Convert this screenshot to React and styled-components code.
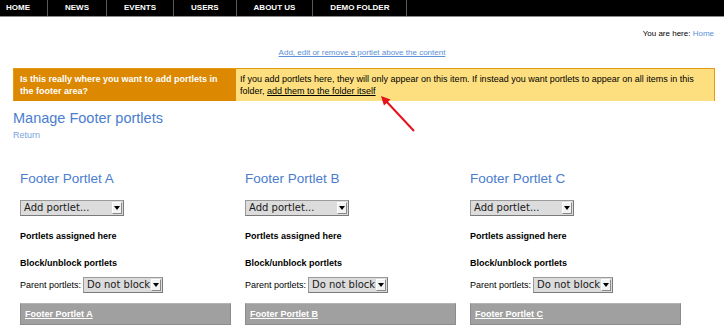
import React from "react";
import styled, { createGlobalStyle } from "styled-components";

const Global = createGlobalStyle`
  html, body { margin: 0; padding: 0; background: #fff; }
  body { font-family: "Liberation Sans", Arial, sans-serif; font-size: 9px; color: #000; }
`;

const Page = styled.div`
  position: relative;
  width: 724px;
  height: 327px;
  overflow: hidden;
`;

const Nav = styled.nav`
  display: flex;
  height: 16px;
  background: #000;
  border-bottom: 1px solid #8a8a8a;
`;

const NavItem = styled.a`
  display: flex;
  align-items: center;
  padding: 0 17px 0 ${(p) => (p.$first ? "6px" : "17px")};
  border-right: 1px solid #5a5a5a;
  color: #fff;
  font: bold 8px/16px "Liberation Sans", Arial, sans-serif;
  text-decoration: none;
  white-space: nowrap;
`;

const Breadcrumb = styled.div`
  margin-top: 11px;
  padding-right: 10px;
  text-align: right;
  font-size: 8px;
  line-height: 12px;
`;

const BlueLink = styled.a`
  color: ${(p) => p.$color || "#5b8fd6"};
  text-decoration: ${(p) => (p.$underline ? "underline" : "none")};
  cursor: pointer;
`;

const ManageLink = styled.div`
  margin-top: 7px;
  text-align: center;
  font-size: 8px;
  line-height: 12px;
`;

const Notice = styled.div`
  display: grid;
  grid-template-columns: 222px 1fr;
  margin: 9px 9px 0 13px;
  border: 1px solid #e69a12;
  height: 31px;
`;

const NoticeQuestion = styled.div`
  background: #dc8800;
  color: #fff;
  font-weight: bold;
  font-size: 9px;
  line-height: 12px;
  padding: 4px 6px;
`;

const NoticeBody = styled.div`
  background: #fddf80;
  color: #000;
  font-size: 9px;
  line-height: 12px;
  padding: 4px 4px;
`;

const InlineLink = styled.a`
  color: #000;
  text-decoration: underline;
`;

const Heading = styled.h1`
  margin: 8px 0 0 13px;
  font-weight: normal;
  font-size: 14.5px;
  line-height: 18px;
  color: #4a7dce;
`;

const Return = styled.div`
  margin: 2px 0 0 13px;
  font-size: 9px;
  line-height: 12px;
`;

const Columns = styled.div`
  display: grid;
  grid-template-columns: repeat(3, 211px);
  column-gap: 14px;
  padding-left: 20px;
  margin-top: 29px;
`;

const Column = styled.section`
  display: flex;
  flex-direction: column;
  align-items: flex-start;
`;

const ColTitle = styled.h2`
  margin: 0;
  font-weight: normal;
  font-size: 13.5px;
  line-height: 18px;
  color: #4a7dce;
`;

const Select = styled.div`
  display: inline-flex;
  align-items: center;
  box-sizing: border-box;
  height: 16px;
  width: ${(p) => p.$width}px;
  margin-top: ${(p) => p.$mt || 0}px;
  background: #dcdcdc;
  border: 1px solid #7a7a7a;
  border-top-color: #9a9a9a;
  border-left-color: #9a9a9a;
  padding-left: 3px;
  font: 10px/14px "DejaVu Sans", sans-serif;
  color: #1a1a1a;
`;

const SelectLabel = styled.span`
  flex: 1;
  white-space: nowrap;
  overflow: hidden;
`;

const SelectArrow = styled.span`
  display: flex;
  align-items: center;
  justify-content: center;
  width: 10px;
  height: 12px;
  margin-right: 1px;
  background: #f2f2f2;
  border: 1px solid #8a8a8a;
  border-top-color: #fff;
  border-left-color: #fff;
  box-sizing: border-box;
  &::after {
    content: "";
    border-left: 3px solid transparent;
    border-right: 3px solid transparent;
    border-top: 4px solid #000;
  }
`;

const BoldLabel = styled.div`
  margin-top: ${(p) => p.$mt}px;
  font-weight: bold;
  font-size: 9px;
  line-height: 12px;
`;

const ParentRow = styled.div`
  display: flex;
  align-items: center;
  gap: 2px;
  margin-top: 8px;
  font-size: 9px;
`;

const PortletBar = styled.div`
  box-sizing: border-box;
  width: 100%;
  height: 22px;
  margin-top: 10px;
  padding-left: 4px;
  display: flex;
  align-items: center;
  background: #a0a0a0;
  border: 1px solid #8c8c8c;
  border-top-color: #b4b4b4;
`;

const BarLink = styled.a`
  color: #fff;
  font-weight: bold;
  font-size: 9px;
  text-decoration: underline;
`;

const Annotation = styled.svg`
  position: absolute;
  left: 0;
  top: 0;
  pointer-events: none;
`;

const DropDown = ({ label, width, mt }) => (
  <Select $width={width} $mt={mt}>
    <SelectLabel>{label}</SelectLabel>
    <SelectArrow />
  </Select>
);

const navItems = ["HOME", "NEWS", "EVENTS", "USERS", "ABOUT US", "DEMO FOLDER"];
const portlets = ["A", "B", "C"];

export default function App() {
  return (
    <Page>
      <Global />
      <Nav>
        {navItems.map((n, i) => (
          <NavItem key={n} $first={i === 0}>
            {n}
          </NavItem>
        ))}
      </Nav>
      <Breadcrumb>
        You are here: <BlueLink $color="#5b8fd6">Home</BlueLink>
      </Breadcrumb>
      <ManageLink>
        <BlueLink $underline>Add, edit or remove a portlet above the content</BlueLink>
      </ManageLink>
      <Notice>
        <NoticeQuestion>
          Is this really where you want to add portlets in the footer area?
        </NoticeQuestion>
        <NoticeBody>
          If you add portlets here, they will only appear on this item. If instead you want
          portlets to appear on all items in this folder,{" "}
          <InlineLink>add them to the folder itself</InlineLink>
        </NoticeBody>
      </Notice>
      <Heading>Manage Footer portlets</Heading>
      <Return>
        <BlueLink $color="#79a2df">Return</BlueLink>
      </Return>
      <Columns>
        {portlets.map((p) => (
          <Column key={p}>
            <ColTitle>Footer Portlet {p}</ColTitle>
            <DropDown label="Add portlet..." width={104} mt={12} />
            <BoldLabel $mt={14}>Portlets assigned here</BoldLabel>
            <BoldLabel $mt={15}>Block/unblock portlets</BoldLabel>
            <ParentRow>
              Parent portlets:
              <DropDown label="Do not block" width={80} />
            </ParentRow>
            <PortletBar>
              <BarLink>Footer Portlet {p}</BarLink>
            </PortletBar>
          </Column>
        ))}
      </Columns>
      <Annotation width="724" height="327" viewBox="0 0 724 327">
        <line x1="414" y1="131" x2="386" y2="101" stroke="#e8101a" strokeWidth="2" />
        <polygon points="381,96 390.5,99.5 384,105.5" fill="#e8101a" />
      </Annotation>
    </Page>
  );
}
